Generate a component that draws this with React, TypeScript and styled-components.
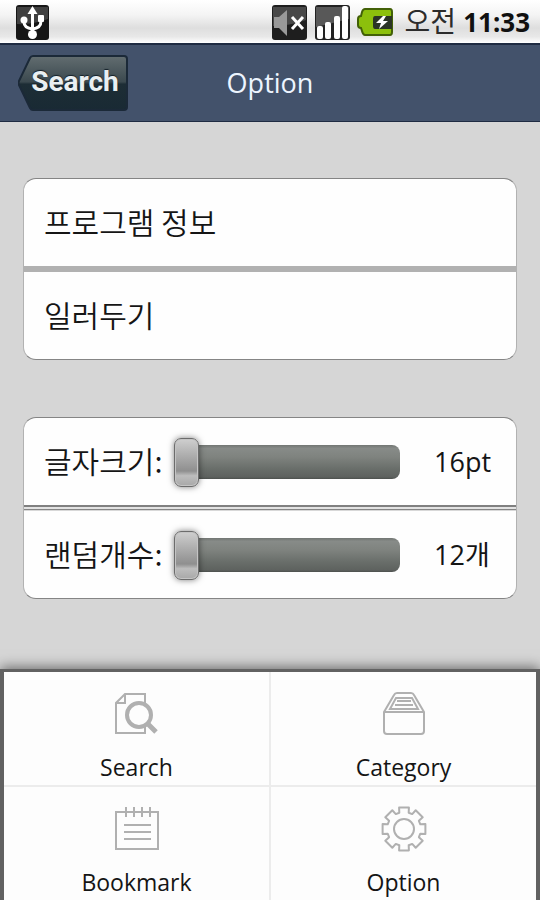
import React, { useState } from "react";
import styled, { createGlobalStyle } from "styled-components";

const GlobalStyle = createGlobalStyle`
  * { box-sizing: border-box; }
  body {
    margin: 0;
    background: #d6d6d6;
    color: #151515;
    font-family: "Open Sans", "Noto Sans CJK KR", sans-serif;
  }
  button, input { font: inherit; color: inherit; }
`;

const Screen = styled.div`
  display: flex;
  flex-direction: column;
  min-height: 100vh;
`;

const StatusBar = styled.div`
  display: flex;
  align-items: center;
  justify-content: space-between;
  height: 43px;
  padding: 0 10px 0 14px;
  background: linear-gradient(#ffffff 0%, #f4f4f4 35%, #dedede 65%, #e8e8e8 85%, #ffffff 100%);
`;

const StatusGroup = styled.div`
  display: flex;
  align-items: center;
  gap: 7px;
`;

const Clock = styled.time`
  margin-left: 4px;
  font-family: "Noto Sans", "Noto Sans CJK KR", sans-serif;
  font-size: 28px;
  line-height: 40px;
  white-space: nowrap;
  color: #2c2c2c;
`;

const ClockDigits = styled.b`
  font-size: 26px;
  color: #101010;
`;

const Header = styled.header`
  display: grid;
  grid-template-columns: 1fr auto 1fr;
  align-items: center;
  height: 79px;
  padding: 0 18px;
  background: #43526b;
  border-top: 2px solid #1f2b42;
  border-bottom: 1px solid #1f2b42;
`;

const Title = styled.h1`
  margin: 0;
  font-size: 27px;
  line-height: 36px;
  font-weight: 400;
  color: #edf5ff;
`;

const BackButton = styled.button`
  position: relative;
  justify-self: start;
  width: 110px;
  height: 56px;
  padding: 0 8px 2px 12px;
  border: 0;
  background: none;
  font-family: Roboto, sans-serif;
  font-size: 28px;
  line-height: 36px;
  font-weight: 700;
  color: #e9eff2;
  text-shadow: 0 -1px 1px #142029;
`;

const BackShape = styled.svg`
  position: absolute;
  inset: 0;
  width: 100%;
  height: 100%;
`;

const BackLabel = styled.span`
  position: relative;
`;

const Content = styled.main`
  flex: 1;
  display: flex;
  flex-direction: column;
  gap: 57px;
  padding: 56px 23px;
`;

const Card = styled.section`
  border: 1px solid #858585;
  border-left-color: #b2b2b2;
  border-right-color: #b2b2b2;
  border-radius: 13px;
  background: #fefefe;
  overflow: hidden;
  font-size: 28px;
  line-height: 40px;
`;

const Divider = styled.hr<{ $split?: boolean }>`
  height: 6px;
  margin: 0;
  border: 0;
  background: ${(p) =>
    p.$split
      ? "linear-gradient(#808080 0 2px, #e3e3e3 2px 4px, #858585 4px 5px, #d8d8d8 5px 6px)"
      : "#b1b1b1"};
`;

const LinkRow = styled.button`
  display: block;
  width: 100%;
  height: 87px;
  padding: 0 20px 4px;
  border: 0;
  background: none;
  text-align: left;
  font-family: "Noto Sans CJK KR", sans-serif;
  font-size: 30px;
  font-weight: 350;
`;

const SliderRow = styled.div`
  display: flex;
  align-items: center;
  height: 87px;
  padding: 0 22px 0 20px;
`;

const SliderLabel = styled.label`
  flex: 0 0 130px;
  padding-bottom: 4px;
  font-family: "Noto Sans CJK KR", sans-serif;
  font-size: 30px;
  font-weight: 350;
  white-space: nowrap;
`;

const SliderValue = styled.output`
  flex: 0 0 60px;
  margin-left: 34px;
  font-size: 27px;
  white-space: nowrap;
`;

const Slider = styled.input`
  flex: 1;
  min-width: 0;
  height: 50px;
  margin: 0;
  appearance: none;
  background: none;

  &::-webkit-slider-runnable-track {
    height: 34px;
    border-radius: 8px;
    background: linear-gradient(#727673 0, #878b88 10%, #7f837f 35%, #696e6a 70%, #5e625f 94%, #4c504d 100%);
  }
  &::-webkit-slider-thumb {
    appearance: none;
    width: 25px;
    height: 49px;
    margin-top: -7px;
    border: 1px solid #6c6c6c;
    border-radius: 7px;
    background: linear-gradient(#cfcfcf, #b2b2b2 30%, #8f8f8f 68%, #bdbdbd 78%, #a8a8a8);
    box-shadow: inset 0 0 0 1px #c4c4c4, 0 0 6px rgba(0, 0, 0, 0.5);
  }
`;

const Menu = styled.nav`
  display: grid;
  grid-template-columns: 1fr 1fr;
  gap: 2px;
  border: solid #626262;
  border-width: 3px 4px 0;
  background: #ececec;
  box-shadow: 0 -2px 12px rgba(0, 0, 0, 0.5);
`;

const MenuItem = styled.button`
  display: flex;
  flex-direction: column;
  align-items: center;
  gap: 12px;
  height: 113px;
  padding: 18px 0 0;
  border: 0;
  background: #fdfdfd;
  font-size: 23px;
  line-height: 34px;

  svg {
    width: 48px;
    height: 48px;
    fill: none;
    stroke: #b0b0b0;
    stroke-width: 2;
    flex: none;
  }
`;

const UsbIcon = () => (
  <svg width="36" height="36" viewBox="0 0 36 36" aria-label="USB">
    <rect x="2" y="1" width="33" height="35" rx="3" fill="#161616" />
    <path d="M3 3h31v12Q18 21 3 20z" fill="#404040" />
    <path d="M18.500 7v22M10 16v2q0 6 8.500 7q8.500-1 8.500-8v-2" fill="none" stroke="#fff" strokeWidth="3" />
    <path d="M18.500 2l5 8h-10z" fill="#fff" />
    <circle cx="10" cy="16" r="3.500" fill="#fff" />
    <rect x="24" y="11" width="6" height="7" rx="1" fill="#fff" />
    <circle cx="18.500" cy="30.500" r="4.500" fill="#fff" />
  </svg>
);

const MuteIcon = () => (
  <svg width="36" height="36" viewBox="0 0 36 36" aria-label="Muted">
    <rect x="1" y="1" width="35" height="35" rx="3" fill="#1e1e1e" />
    <path d="M2 3h33v13Q18 22 2 22z" fill="#484848" />
    <path d="M3 13h5l8-7v26l-8-8H3z" fill="#999" />
    <path d="M21 13l11 12M32 13L21 25" stroke="#fff" strokeWidth="3" />
  </svg>
);

const SignalIcon = () => (
  <svg width="36" height="36" viewBox="0 0 36 36" aria-label="Signal">
    <rect x="1" y="1" width="35" height="35" rx="3" fill="#222" />
    <path d="M2 3h33v12L2 23z" fill="#585858" />
    <g fill="#fff">
      <rect x="3" y="22" width="6" height="13" rx="2" />
      <rect x="11" y="18" width="6" height="17" rx="2" />
      <rect x="20" y="12" width="6" height="23" rx="2" />
      <rect x="28" y="2" width="6" height="33" rx="2" />
    </g>
  </svg>
);

const BatteryIcon = () => (
  <svg width="36" height="28" viewBox="0 0 36 28" aria-label="Charging">
    <path d="M8 1h25q2 0 2 3v20q0 3-2 3H8q-2 0-3-4l-1-3q-3 0-3-3v-6q0-3 3-3l1-4q1-3 3-3z" fill="#8cc00c" stroke="#426007" strokeWidth="2" />
    <path d="M18 8h17v13H18q-2 0-2-3v-7q0-3 2-3z" fill="#2b3426" />
    <path d="M26 8l-7 7h5l-2 6 9-8h-5l3-5z" fill="#fff" />
  </svg>
);

const SearchIcon = () => (
  <svg viewBox="0 0 48 48">
    <path d="M32 4H12L3 13v30h29zM12 4v9H3" />
    <circle cx="26" cy="25" r="12" strokeWidth="4" fill="#fdfdfd" />
    <path d="M34 33l9 9" strokeWidth="5" />
  </svg>
);

const CategoryIcon = () => (
  <svg viewBox="0 0 48 48">
    <path d="M4 22L14 5q1-2 3-2h14q2 0 3 2l10 17v19q0 3-3 3H7q-3 0-3-3zM4 22h40" />
    <path d="M10 19l6-11h16l6 11zM15 15h18M17 11h14" />
  </svg>
);

const BookmarkIcon = () => (
  <svg viewBox="0 0 48 48">
    <path d="M3 7H45V44H3z" />
    <path d="M13 2v10M21 2v10M29 2v10M37 2v10" />
    <path d="M11 20h27M11 27h27M11 34h27" />
  </svg>
);

const TEETH = 8;
const gearPath = Array.from({ length: TEETH }, (_, k) =>
  [
    [-16, 17],
    [-13, 22],
    [13, 22],
    [16, 17],
  ]
    .map(([offset, radius]) => {
      const angle = (((k * 360) / TEETH + offset) * Math.PI) / 180;
      return `${(24 + radius * Math.sin(angle)).toFixed(1)} ${(24 - radius * Math.cos(angle)).toFixed(1)}`;
    })
    .join("L")
).join("L");

const OptionIcon = () => (
  <svg viewBox="0 0 48 48">
    <path d={`M${gearPath}Z`} strokeLinejoin="round" />
    <circle cx="24" cy="24" r="10" />
  </svg>
);

const menuItems = [
  { label: "Search", Icon: SearchIcon },
  { label: "Category", Icon: CategoryIcon },
  { label: "Bookmark", Icon: BookmarkIcon },
  { label: "Option", Icon: OptionIcon },
];

type SettingProps = {
  id: string;
  label: string;
  unit: string;
  min: number;
  max: number;
};

function SliderSetting({ id, label, unit, min, max }: SettingProps) {
  const [value, setValue] = useState(min);
  return (
    <SliderRow>
      <SliderLabel htmlFor={id}>{label}:</SliderLabel>
      <Slider
        id={id}
        type="range"
        min={min}
        max={max}
        value={value}
        onChange={(e) => setValue(Number(e.target.value))}
      />
      <SliderValue htmlFor={id}>{value}{unit}</SliderValue>
    </SliderRow>
  );
}

export default function App() {
  return (
    <Screen>
      <GlobalStyle />
      <StatusBar>
        <UsbIcon />
        <StatusGroup>
          <MuteIcon />
          <SignalIcon />
          <BatteryIcon />
          <Clock>오전 <ClockDigits>11:33</ClockDigits></Clock>
        </StatusGroup>
      </StatusBar>
      <Header>
        <BackButton type="button">
          <BackShape viewBox="0 0 110 56" preserveAspectRatio="none" aria-hidden="true">
            <defs>
              <linearGradient id="backFill" x1="0" y1="0" x2="0" y2="1">
                <stop offset="0" stopColor="#626d70" />
                <stop offset="0.48" stopColor="#3b494f" />
                <stop offset="0.52" stopColor="#1d2d35" />
                <stop offset="1" stopColor="#192a34" />
              </linearGradient>
            </defs>
            <path d="M15 1H106q3 0 3 3v48q0 3-3 3H15q-2 0-3-2L1 30q-1-2 0-4L12 3q1-2 3-2z" fill="url(#backFill)" stroke="#1b2938" strokeWidth="2" />
          </BackShape>
          <BackLabel>Search</BackLabel>
        </BackButton>
        <Title>Option</Title>
      </Header>
      <Content>
        <Card>
          <LinkRow type="button">프로그램 정보</LinkRow>
          <Divider />
          <LinkRow type="button">일러두기</LinkRow>
        </Card>
        <Card>
          <SliderSetting id="font-size" label="글자크기" unit="pt" min={16} max={40} />
          <Divider $split />
          <SliderSetting id="random-count" label="랜덤개수" unit="개" min={12} max={50} />
        </Card>
      </Content>
      <Menu>
        {menuItems.map(({ label, Icon }) => (
          <MenuItem type="button" key={label}>
            <Icon />
            {label}
          </MenuItem>
        ))}
      </Menu>
    </Screen>
  );
}
